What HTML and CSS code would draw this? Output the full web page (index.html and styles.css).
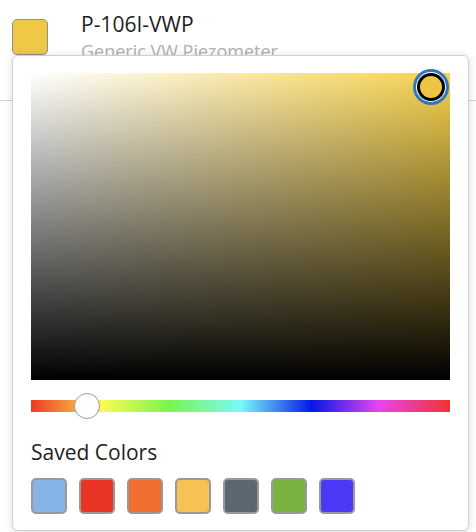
FILE: index.html
```html
<!DOCTYPE html>
<html lang="en">

<head>
    <meta charset="UTF-8">
    <meta name="viewport" content="width=device-width, initial-scale=1.0">
    <title>Sensor colour</title>
    <link rel="stylesheet" href="styles.css">
</head>

<body>
    <div class="item">
        <div class="item-swatch"></div>
        <div class="item-text">
            <div class="item-title">P-106I-VWP</div>
            <div class="item-sub">Generic VW Piezometer</div>
        </div>
    </div>

    <div class="picker">
        <div class="sv">
            <div class="sv-thumb"></div>
        </div>
        <div class="hue">
            <div class="hue-thumb"></div>
        </div>
        <div class="saved-title">Saved Colors</div>
        <div class="saved">
            <button class="saved-swatch" style="background-color: #87b4e6"></button>
            <button class="saved-swatch" style="background-color: #e93424"></button>
            <button class="saved-swatch" style="background-color: #ef6e30"></button>
            <button class="saved-swatch" style="background-color: #f7c255"></button>
            <button class="saved-swatch" style="background-color: #5c6770"></button>
            <button class="saved-swatch" style="background-color: #78b341"></button>
            <button class="saved-swatch" style="background-color: #4a3af7"></button>
        </div>
    </div>
</body>

</html>
```

FILE: styles.css
```css
body {
    margin: 0;
    background-color: #fff;
    font-family: "Open Sans", sans-serif;
    color: #1e1e1e;
}

.item {
    display: flex;
    align-items: flex-start;
    height: 100px;
    padding: 0 12px;
    border-bottom: 1px solid #d4d4d4;
    box-sizing: content-box;
}

.item-swatch {
    width: 36px;
    height: 36px;
    margin-top: 19px;
    box-sizing: border-box;
    border: 1px solid #8f8f8f;
    border-radius: 5px;
    background-color: #efc844;
}

.item-text {
    margin-left: 33px;
    margin-top: 9px;
}

.item-title {
    font-size: 21px;
    line-height: 30px;
}

.item-sub {
    font-size: 18px;
    line-height: 24px;
    color: #b0b0b0;
}

.picker {
    position: absolute;
    top: 55px;
    left: 12px;
    width: 457px;
    height: 476px;
    box-sizing: border-box;
    padding: 17px 18px;
    background-color: #fff;
    border: 1px solid #d0d0d0;
    border-radius: 6px;
    box-shadow: 0 1px 8px rgba(0, 0, 0, 0.15);
}

.sv {
    position: relative;
    height: 307px;
    background: linear-gradient(to top, #000, rgba(0, 0, 0, 0)),
        linear-gradient(to right, #fff, #f7d24c);
}

.sv-thumb {
    position: absolute;
    top: 0;
    left: 386px;
    width: 28px;
    height: 28px;
    box-sizing: border-box;
    border: 3px solid #000;
    border-radius: 50%;
    background-color: #edc544;
    box-shadow: 0 0 0 1px #fff, 0 0 0 4px #2f78c0;
}

.hue {
    position: relative;
    height: 12px;
    margin-top: 20px;
    background: linear-gradient(to right,
            #ee3a24 0%,
            #f5a03a 10%,
            #f9fb52 17%,
            #79f54e 33%,
            #7af9f9 50%,
            #0418e8 67%,
            #e944ef 83%,
            #ee3430 100%);
}

.hue-thumb {
    position: absolute;
    top: -7px;
    left: 43px;
    width: 26px;
    height: 26px;
    box-sizing: border-box;
    border: 1px solid #9a9a9a;
    border-radius: 50%;
    background-color: #fff;
}

.saved-title {
    margin-top: 25px;
    font-size: 21px;
    line-height: 30px;
}

.saved {
    display: flex;
    gap: 12px;
    margin-top: 11px;
}

.saved-swatch {
    width: 36px;
    height: 36px;
    padding: 0;
    box-sizing: border-box;
    border: 2px solid #999;
    border-radius: 5px;
    cursor: pointer;
}
```
